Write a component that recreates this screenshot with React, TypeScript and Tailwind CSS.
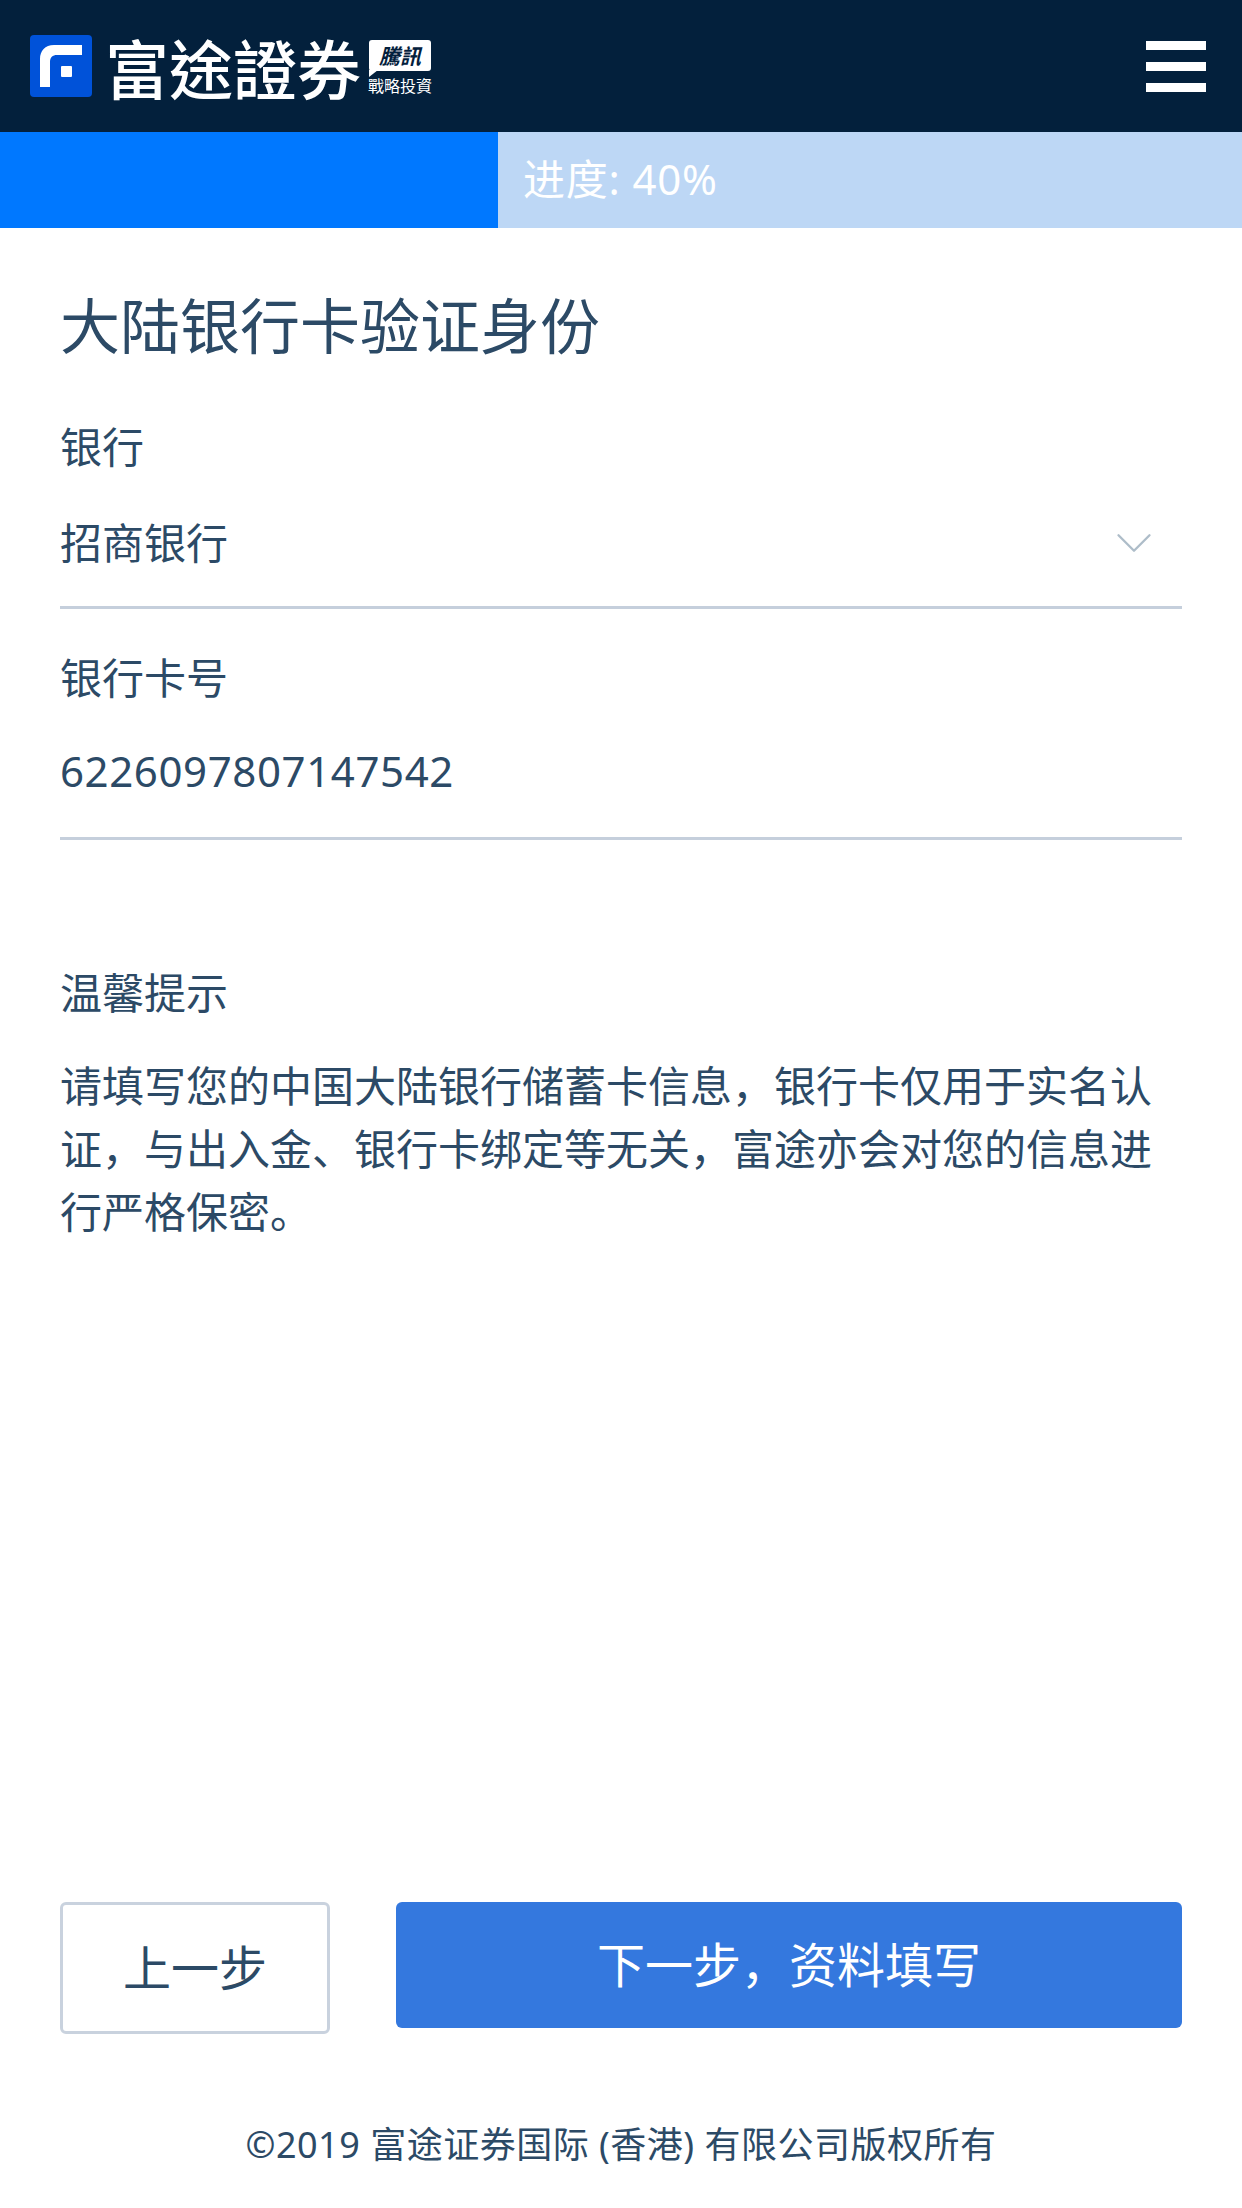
import { ChevronDown } from "lucide-react";

const font = "font-['Noto_Sans','Noto_Sans_CJK_SC',sans-serif]";

function Logo() {
  return (
    <div className="flex items-center">
      <svg width="62" height="62" viewBox="0 0 62 62" className="shrink-0">
        <rect width="62" height="62" rx="4" fill="#0052d9" />
        <path d="M10 52V24C10 16 15 10 24 10H52V20H27C22.500 20 20 22.500 20 27V52Z" fill="#fff" />
        <rect x="31" y="31" width="11" height="11" rx="1" fill="#fff" />
      </svg>
      <span className="ml-[13px] w-[256px] text-[64px] leading-[64px] text-white font-['Noto_Sans_CJK_TC',sans-serif] font-medium whitespace-nowrap">
        富途證券
      </span>
      <div className="ml-[8px] flex w-[62px] flex-col items-center">
        <div className="relative flex h-[31px] w-[62px] items-center justify-center rounded-[3px] bg-white">
          <span className="text-[21px] leading-none font-bold italic text-[#03203c] font-['Noto_Sans_CJK_TC',sans-serif]">騰訊</span>
          <svg width="9" height="7" viewBox="0 0 9 7" className="absolute left-0 top-[30px]">
            <path d="M0 0H9L0 7Z" fill="#fff" />
          </svg>
        </div>
        <span className="mt-[6px] whitespace-nowrap text-[16px] leading-[16px] text-white font-['Noto_Sans_CJK_TC',sans-serif]">戰略投資</span>
      </div>
    </div>
  );
}

function Field({ label, value, select, wide }: { label: string; value: string; select?: boolean; wide?: boolean }) {
  return (
    <div>
      <div className="h-[63px] text-[42px] leading-[63px] text-[#2c4a66]">{label}</div>
      <div className={`mt-[29px] flex h-[102px] items-start justify-between border-b-[3px] border-[#c5cfdc] ${wide ? "pt-[1px]" : "pt-[4px]"}`}>
        <span className={wide ? "text-[42px] leading-[63px] tracking-[0.6px] text-[#2c4a66]" : "text-[42px] leading-[63px] text-[#2c4a66]"}>{value}</span>
        {select && <ChevronDown className="mr-[17px] mt-[1px] h-[62px] w-[62px] text-[#aebdc9]" strokeWidth={0.9} />}
      </div>
    </div>
  );
}

export default function App() {
  return (
    <div className={`flex min-h-[2208px] flex-col bg-white ${font}`}>
      <header className="flex h-[132px] items-center justify-between bg-[#03203c] pl-[30px] pr-[36px]">
        <Logo />
        <div className="flex w-[60px] flex-col gap-[12px]">
          <div className="h-[9px] bg-white" />
          <div className="h-[9px] bg-white" />
          <div className="h-[9px] bg-white" />
        </div>
      </header>

      <div className="flex h-[96px] bg-[#bdd7f5]">
        <div className="h-full w-[498px] bg-[#0078ff]" />
        <div className="pl-[25px] text-[42px] leading-[94px] tracking-[0.8px] text-white">进度: 40%</div>
      </div>

      <main className="flex flex-1 flex-col px-[60px]">
        <h1 className="mt-[53px] text-[60px] leading-[90px] text-[#2c4a66]">大陆银行卡验证身份</h1>
        <div className="mt-[44px]">
          <Field label="银行" value="招商银行" select />
        </div>
        <div className="mt-[37px]">
          <Field label="银行卡号" value="6226097807147542" wide />
        </div>
        <div className="mt-[121px] text-[42px] leading-[63px] text-[#2c4a66]">温馨提示</div>
        <p className="mt-[30px] text-[42px] leading-[63px] text-[#2c4a66]">
          请填写您的中国大陆银行储蓄卡信息，银行卡仅用于实名认证，与出入金、银行卡绑定等无关，富途亦会对您的信息进行严格保密。
        </p>
      </main>

      <div className="flex items-start justify-between px-[60px]">
        <button className="h-[132px] w-[270px] rounded-[6px] border-[3px] border-[#c9d2de] bg-white text-[48px] text-[#2c4a66]">上一步</button>
        <button className="h-[126px] w-[786px] rounded-[6px] bg-[#3478de] text-[48px] text-white">下一步，资料填写</button>
      </div>

      <footer className="mt-[84px] h-[90px] text-center text-[36px] leading-[54px] tracking-[0.5px] text-[#2c4a66]">
        ©2019 富途证券国际 (香港) 有限公司版权所有
      </footer>
    </div>
  );
}
